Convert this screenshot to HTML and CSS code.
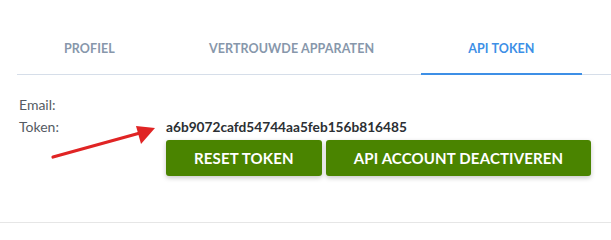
FILE: index.html
```html
<!DOCTYPE html>
<html lang="nl">
<head>
<meta charset="utf-8">
<title>API Token</title>
<link rel="stylesheet" href="styles.css">
</head>
<body>
<div class="page">
  <nav class="tabs">
    <a class="tab">PROFIEL</a>
    <a class="tab">VERTROUWDE APPARATEN</a>
    <a class="tab active">API TOKEN</a>
  </nav>
  <section class="panel">
    <div class="row">
      <span class="label">Email:</span>
      <span class="value"></span>
    </div>
    <div class="row">
      <span class="label">Token:</span>
      <span class="value token">a6b9072cafd54744aa5feb156b816485</span>
    </div>
    <div class="row">
      <span class="label"></span>
      <div class="actions">
        <button class="btn">RESET TOKEN</button>
        <button class="btn">API ACCOUNT DEACTIVEREN</button>
      </div>
    </div>
    <svg class="arrow" width="120" height="40" viewBox="0 0 120 40" aria-hidden="true">
      <line x1="3" y1="35" x2="90" y2="11" stroke="#e02424" stroke-width="3.2" stroke-linecap="round"/>
      <polygon points="105,6 86,4 91,22" fill="#e02424"/>
    </svg>
  </section>
</div>
</body>
</html>
```
FILE: styles.css
```css
html, body {
  margin: 0;
  padding: 0;
  background: #ffffff;
}
body {
  font-family: "Lato", "Liberation Sans", sans-serif;
  overflow: hidden;
}
.page {
  height: 223px;
  border-bottom: 1px solid #e6e6e6;
  padding-top: 22px;
  box-sizing: border-box;
}
.tabs {
  display: flex;
  margin-left: 17px;
  border-bottom: 1px solid #d6dee9;
}
.tab {
  display: block;
  padding: 19px 47px 16px;
  font-size: 12.5px;
  line-height: 16px;
  font-weight: 700;
  letter-spacing: 0.1px;
  color: #8797ab;
  border-bottom: 2px solid transparent;
  margin-bottom: -1px;
  cursor: pointer;
}
.tab.active {
  color: #3d8fe6;
  border-bottom-color: #3d8fe6;
}
.panel {
  position: relative;
  padding: 18px 0 0 19px;
}
.row {
  display: flex;
  align-items: center;
  min-height: 22px;
}
.label {
  width: 147px;
  flex: none;
  font-size: 14px;
  color: #555b63;
}
.token {
  font-size: 13.7px;
  font-weight: 700;
  color: #2b2f33;
}
.actions {
  display: flex;
  gap: 4px;
  margin-top: 3px;
}
.btn {
  height: 36px;
  padding: 0 28px;
  border: none;
  border-radius: 3px;
  background: #4a8400;
  color: #ffffff;
  font-family: "Lato", "Liberation Sans", sans-serif;
  font-size: 15px;
  font-weight: 700;
  letter-spacing: 0.15px;
  box-shadow: 0 2px 5px rgba(0, 0, 0, 0.22);
  cursor: pointer;
}
.arrow {
  position: absolute;
  left: 50px;
  top: 47px;
}
```
